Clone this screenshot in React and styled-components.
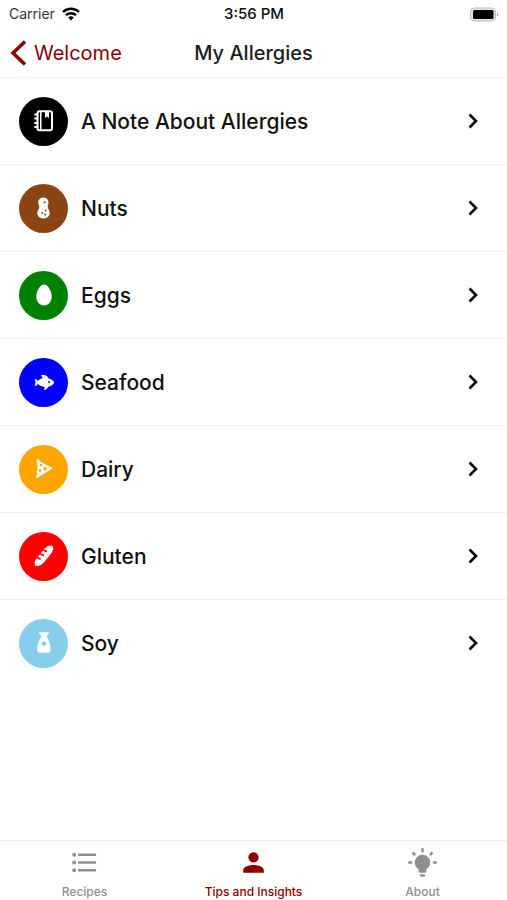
import React, { useState } from 'react'
import styled, { createGlobalStyle } from 'styled-components'

const GlobalStyle = createGlobalStyle`
    * {
        box-sizing: border-box;
    }
    body {
        margin: 0;
        background: #fff;
        color: #111;
        font-family: Inter, "Liberation Sans", sans-serif;
    }
`

const Screen = styled.div`
    display: flex;
    flex-direction: column;
    min-height: 100vh;
`

const StatusBar = styled.div`
    display: grid;
    grid-template-columns: 1fr auto 1fr;
    align-items: center;
    height: 28px;
    padding: 0 8px 0 9px;
    font-size: 14px;
    line-height: 20px;
`

const Carrier = styled.span`
    display: flex;
    align-items: center;
    gap: 7px;
    color: #333;
`

const Time = styled.time`
    font-size: 15px;
    font-weight: 500;
`

const BatteryIcon = styled.svg`
    justify-self: end;
`

const Header = styled.header`
    display: grid;
    grid-template-columns: 1fr auto 1fr;
    align-items: center;
    height: 50px;
    padding: 0 10px;
    border-bottom: 1px solid #f2f2f2;
`

const BackLink = styled.a`
    display: flex;
    align-items: center;
    justify-self: start;
    gap: 8px;
    color: #8b0000;
    font-size: 20px;
    line-height: 26px;
    text-decoration: none;
`

const Title = styled.h1`
    margin: 0;
    color: #1c1c1e;
    font-size: 20px;
    font-weight: 500;
    line-height: 26px;
    white-space: nowrap;
`

const List = styled.ul`
    flex: 1;
    margin: 0;
    padding: 0;
    list-style: none;
`

const ListItem = styled.li`
    & + & {
        border-top: 1px solid #f2f2f2;
    }
`

const RowLink = styled.a`
    display: flex;
    align-items: center;
    gap: 13px;
    height: 86px;
    padding: 0 28px 0 19px;
    color: #111;
    font-size: 21px;
    font-weight: 500;
    line-height: 27px;
    text-decoration: none;
`

const Badge = styled.span`
    display: flex;
    align-items: center;
    justify-content: center;
    flex: none;
    width: 49px;
    height: 49px;
    border-radius: 50%;
    background: ${props => props.$color};
`

const RowLabel = styled.span`
    flex: 1;
`

const TabBar = styled.nav`
    display: flex;
    height: 60px;
    border-top: 1px solid #ececec;
`

const Tab = styled.button`
    display: flex;
    flex: 1;
    flex-direction: column;
    align-items: center;
    gap: 6px;
    padding: 6px 0 0;
    border: 0;
    background: none;
    color: ${props => (props.$active ? '#8b0000' : '#8e8e8f')};
    font-family: inherit;
    font-size: 12px;
    font-weight: 500;
    line-height: 16px;
    cursor: pointer;
`

const Icon = ({ size = 24, children }) => (
    <svg width={size} height={size} viewBox="0 0 24 24" fill="currentColor" aria-hidden="true">
        {children}
    </svg>
)

const NotebookIcon = () => (
    <g>
        <rect x="5.5" y="2.300" width="14.500" height="19" rx="2" fill="none" stroke="#fff" strokeWidth="2" />
        <path d="M8 3h1.500v17.600H8z" />
        <path d="M13 3h4v6l-2-1.500L13 9z" />
        <path d="M2.300 4.500h4v2h-4zM2.300 8.600h4v2h-4zM2.300 12.900h4v2h-4zM2.300 17h4v2h-4z" />
    </g>
)

const PeanutIcon = () => (
    <g>
        <path d="M11.300 1.400C8.300 1.400 6.200 3.700 6.200 6.400c0 1.800 1.200 3 1.200 4.500S5.300 14 5.300 16.700c0 3.400 2.700 5.800 6.200 5.800s6.200-2.400 6.200-5.800c0-2.700-2-4.200-2-5.800 0-1.500.8-2.700.8-4.500 0-2.800-2.200-5-5.200-5z" />
        <g fill="#8b4513">
            <circle cx="12.600" cy="6.200" r="1" />
            <circle cx="13.600" cy="14.500" r="1" />
            <circle cx="10.400" cy="17" r="1" />
            <circle cx="13.200" cy="18.500" r="1" />
        </g>
    </g>
)

const EggIcon = () => (
    <path d="M12 1.500c-3.800 0-7.700 6.400-7.700 12 0 5.300 3.300 9 7.700 9s7.700-3.700 7.700-9c0-5.600-3.900-12-7.700-12z" />
)

const FishIcon = () => (
    <path d="M12 20l.76-3c-3.260-.21-6.170-1.600-7.010-3.420-.09.480-.22.920-.42 1.250C4.670 16 3.330 16 2 16c1.100 0 1.500-1.570 1.500-3.500S3.100 9 2 9c1.330 0 2.670 0 3.330 1.170.2.330.33.770.42 1.250.65-1.420 2.570-2.570 4.910-3.100L9 5c2 0 4 0 5.330.67 1.130.56 1.780 1.600 2.360 2.710C19.610 9.080 22 10.660 22 12.500c0 1.880-2.500 3.500-5.500 4.160-.83 1.100-1.640 2.120-2.330 2.670C13.330 20 12.670 20 12 20zm5-9a1 1 0 1 0 0 2 1 1 0 0 0 0-2z" />
)

const CheeseIcon = () => (
    <g>
        <path d="M5.200 2.600c1.500-.4 2.800.4 3.200 2.200l11.300 5.700c.8.400.8 1.200 0 1.600L5.500 20.700c-1 .6-1.700-.2-1.300-1.200l1.100-3.300c-.9-.4-1.100-1.500-.3-2.500.8-1.200 1-3 .3-4.500-.4-1-.2-1.700.4-2.500-1.500-.8-1.900-3.400-.5-4.100z" />
        <g fill="#ffa500">
            <circle cx="9" cy="8" r="1.200" />
            <circle cx="13" cy="11.800" r="1.700" />
            <circle cx="7.900" cy="13.600" r="1.300" />
        </g>
    </g>
)

const BreadIcon = () => (
    <g>
        <path d="M3.200 21.200c-1.500-2.300-.2-5.700 3.500-9.500l5-6.500c3-3.200 6.800-4.700 8.800-3.200 1.700 1.600.6 5.200-2.200 8.500l-5.700 7.200c-3.400 3.900-7.500 5.500-9.400 3.500z" />
        <path d="M3.500 13l5.200 2.100M6.500 9.200l5.500 2.200M9.600 5.400l5.500 2.200" fill="none" stroke="#f00" strokeWidth="1.700" />
    </g>
)

const SoyIcon = () => (
    <g>
        <path d="M7.400 1.200h9.300c.5 0 .6.400.3.800l-2.700 3.600c2.300 2.600 4.300 8.200 4.300 13.200 0 2-1 2.900-2.800 2.900H8c-1.800 0-2.800-.9-2.800-2.900 0-5 2-10.600 4.500-13.200L7 2c-.3-.4-.1-.8.4-.8z" />
        <path d="M12 9.800l2.800 2.800L12 15.400l-2.800-2.800z" fill="#87ceeb" />
    </g>
)

const ListIcon = () => (
    <g>
        <circle cx="4" cy="6" r="1.500" />
        <circle cx="4" cy="12" r="1.500" />
        <circle cx="4" cy="18" r="1.500" />
        <path d="M7 5h14v2H7zM7 11h14v2H7zM7 17h14v2H7z" />
    </g>
)

const PersonIcon = () => (
    <path d="M12 4a4 4 0 1 1 0 8 4 4 0 0 1 0-8zm0 10c4.420 0 8 1.790 8 4v2H4v-2c0-2.210 3.580-4 8-4z" />
)

const BulbIcon = () => (
    <path d="M12 6a6 6 0 0 1 6 6c0 2.220-1.210 4.160-3 5.200V19a1 1 0 0 1-1 1h-4a1 1 0 0 1-1-1v-1.800c-1.790-1.040-3-2.980-3-5.200a6 6 0 0 1 6-6m2 15v1a1 1 0 0 1-1 1h-2a1 1 0 0 1-1-1v-1h4m6-10h3v2h-3v-2M1 11h3v2H1v-2M13 1v3h-2V1h2M4.920 3.500l2.130 2.140-1.420 1.410L3.500 4.930 4.920 3.500m12.030 2.130l2.120-2.130 1.430 1.430-2.130 2.120-1.420-1.420z" />
)

const allergies = [
    { id: 'note', label: 'A Note About Allergies', color: '#000', Glyph: NotebookIcon },
    { id: 'nuts', label: 'Nuts', color: '#8b4513', Glyph: PeanutIcon },
    { id: 'eggs', label: 'Eggs', color: '#008000', Glyph: EggIcon },
    { id: 'seafood', label: 'Seafood', color: '#00f', Glyph: FishIcon },
    { id: 'dairy', label: 'Dairy', color: '#ffa500', Glyph: CheeseIcon },
    { id: 'gluten', label: 'Gluten', color: '#f00', Glyph: BreadIcon },
    { id: 'soy', label: 'Soy', color: '#87ceeb', Glyph: SoyIcon },
]

const tabs = [
    { id: 'recipes', label: 'Recipes', Glyph: ListIcon },
    { id: 'tips', label: 'Tips and Insights', Glyph: PersonIcon },
    { id: 'about', label: 'About', Glyph: BulbIcon },
]

function App() {

    //states
    const [activeTab, setActiveTab] = useState('tips')

    return (
        <>
            <GlobalStyle />
            <Screen>

                <StatusBar>
                    <Carrier>
                        Carrier
                        <svg width="18" height="14" viewBox="0 0 18 14" fill="none" stroke="#000" strokeWidth="2.400" aria-hidden="true">
                            <path d="M1 5a11.500 11.500 0 0 1 16 0M4 8.200a7.200 7.200 0 0 1 10 0" />
                            <path d="M9 13.500l-2.800-2.900a4 4 0 0 1 5.600 0z" fill="#000" stroke="none" />
                        </svg>
                    </Carrier>
                    <Time>3:56 PM</Time>
                    <BatteryIcon width="30" height="15" viewBox="0 0 30 15" aria-hidden="true">
                        <rect x="1.500" y="1" width="25" height="13" rx="4" fill="#e4e4e4" stroke="#bbb" strokeWidth="1" />
                        <rect x="4" y="3" width="20.500" height="9" rx="1.500" fill="#000" />
                        <path d="M28 5.500c2 .8 2 3.200 0 4z" fill="#aaa" />
                    </BatteryIcon>
                </StatusBar>

                <Header>
                    <BackLink href="#welcome">
                        <svg width="16" height="26" viewBox="0 0 16 26" fill="none" stroke="currentColor" strokeWidth="3.500" aria-hidden="true">
                            <path d="M15 1.500L3 13l12 11.500" />
                        </svg>
                        Welcome
                    </BackLink>
                    <Title>My Allergies</Title>
                </Header>

                <List>
                    {allergies.map(({ id, label, color, Glyph }) => (
                        <ListItem key={id}>
                            <RowLink href={`#${id}`}>
                                <Badge $color={color}>
                                    <svg width="24" height="24" viewBox="0 0 24 24" fill="#fff" aria-hidden="true">
                                        <Glyph />
                                    </svg>
                                </Badge>
                                <RowLabel>{label}</RowLabel>
                                <svg width="11" height="16" viewBox="0 0 11 16" fill="none" stroke="#000" strokeWidth="2.600" aria-hidden="true">
                                    <path d="M1.500 1.500L8 8l-6.500 6.500" />
                                </svg>
                            </RowLink>
                        </ListItem>
                    ))}
                </List>

                <TabBar>
                    {tabs.map(({ id, label, Glyph }) => (
                        <Tab
                            key={id}
                            type="button"
                            $active={id === activeTab}
                            onClick={() => setActiveTab(id)}
                        >
                            <Icon size={31}>
                                <Glyph />
                            </Icon>
                            {label}
                        </Tab>
                    ))}
                </TabBar>

            </Screen>
        </>
    )
}

export default App
